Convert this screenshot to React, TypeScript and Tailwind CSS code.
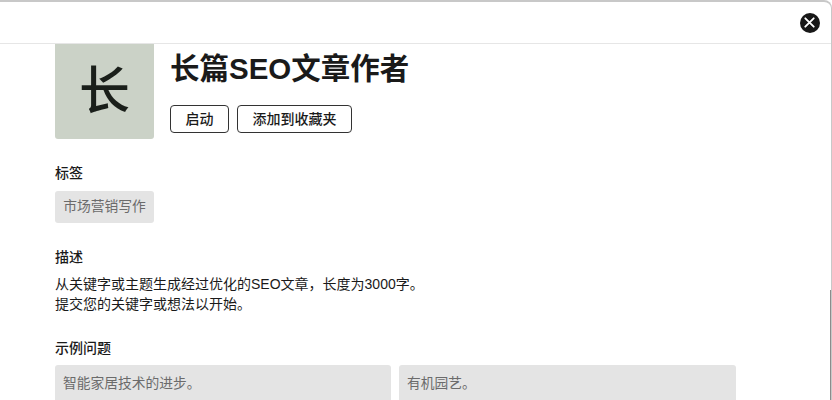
const FONT = "font-['Liberation_Sans','Noto_Sans_CJK_SC',sans-serif]";

function CloseIcon() {
  return (
    <span className="flex h-5 w-5 items-center justify-center rounded-full bg-[#181818]">
      <svg width="11" height="11" viewBox="0 0 10 10" fill="none" stroke="white" strokeWidth="1.7" strokeLinecap="round">
        <path d="M1.2 1.2 8.8 8.8M8.8 1.2 1.2 8.8" />
      </svg>
    </span>
  );
}

function SectionTitle({ children }: { children: string }) {
  return <h4 className="text-[14px] font-medium leading-[20px] text-[#1a1a1a]">{children}</h4>;
}

function OutlineButton({ label, width }: { label: string; width: string }) {
  return (
    <button
      type="button"
      className={`h-[28px] rounded-[4px] border border-[#333] bg-white text-[14px] font-medium leading-none text-[#1a1a1a] ${width}`}
    >
      {label}
    </button>
  );
}

export default function App() {
  return (
    <div className={`relative flex h-[400px] w-[832px] flex-col overflow-hidden rounded-tr-[8px] border-t-2 border-r border-[#c8c8c8] bg-white ${FONT}`}>
      {/* Header */}
      <div className="flex h-[42px] shrink-0 items-center justify-end border-b border-b-[#e6e6e6] pr-[11.5px]">
        <CloseIcon />
      </div>

      {/* Scrolled body */}
      <div className="min-h-0 flex-1 overflow-hidden pl-[55px] pr-[95px]">
        <div className="-mt-[5px]">
          <div className="flex gap-[16px]">
            <div className="flex h-[100px] w-[99px] shrink-0 items-center justify-center rounded-[3px] bg-[#cbd2c7] pt-[4px] text-[51px] font-medium leading-none text-[#1a1f1a]">
              长
            </div>
            <div className="pt-[10px]">
              <h1 className="text-[29.5px] font-bold leading-[40px] text-[#1a1a1a]">长篇SEO文章作者</h1>
              <div className="mt-[16px] flex gap-[8px]">
                <OutlineButton label="启动" width="w-[59px]" />
                <OutlineButton label="添加到收藏夹" width="w-[115px]" />
              </div>
            </div>
          </div>

          <div className="mt-[24px]">
            <SectionTitle>标签</SectionTitle>
            <div className="mt-[8px] flex">
              <span className="flex h-[32px] w-[99px] items-center justify-center rounded-[3px] bg-[#e4e4e4] text-[13.75px] text-[#6b6b6b]">
                市场营销写作
              </span>
            </div>
          </div>

          <div className="mt-[24px]">
            <SectionTitle>描述</SectionTitle>
            <p className="mt-[7px] text-[14px] leading-[20px] text-[#1a1a1a]">
              从关键字或主题生成经过优化的SEO文章，长度为3000字。
              <br />
              提交您的关键字或想法以开始。
            </p>
          </div>

          <div className="mt-[24px]">
            <SectionTitle>示例问题</SectionTitle>
            <div className="mt-[7px] grid grid-cols-[336px_337px] gap-[8px]">
              <div className="h-[60px] rounded-[3px] bg-[#e4e4e4] px-[8px] py-[9px] text-[13.75px] leading-[20px] text-[#6b6b6b]">
                智能家居技术的进步。
              </div>
              <div className="h-[60px] rounded-[3px] bg-[#e4e4e4] px-[8px] py-[9px] text-[13.75px] leading-[20px] text-[#6b6b6b]">
                有机园艺。
              </div>
            </div>
          </div>
        </div>
      </div>

      {/* Darker window edge at the lower right */}
      <div className="absolute right-[-1px] top-[288px] bottom-0 w-[2px] bg-[#8c8c8c]" />
    </div>
  );
}
